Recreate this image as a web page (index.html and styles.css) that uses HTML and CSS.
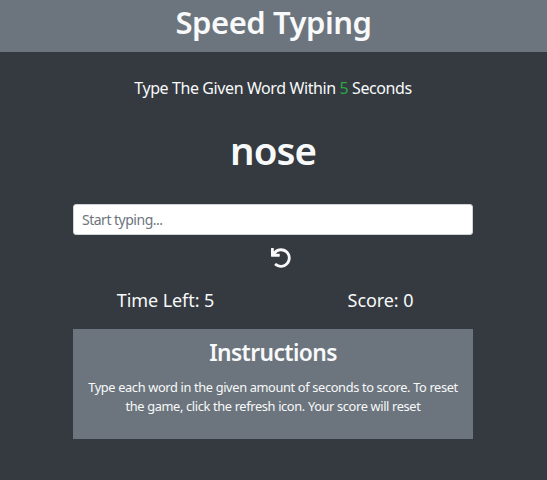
FILE: index.html
```html
<!DOCTYPE html>
<html lang="en">
<head>
<meta charset="utf-8">
<title>Speed Typing</title>
<link rel="stylesheet" href="styles.css">
</head>
<body>
<header class="header"><h1 class="title">Speed Typing</h1></header>
<main class="game">
  <p class="prompt">Type The Given Word Within <span class="seconds">5</span> Seconds</p>
  <h2 class="word">nose</h2>
  <input class="word-input" type="text" placeholder="Start typing...">
  <div class="reset">
    <svg class="reset-icon" viewBox="0 0 512 512" aria-hidden="true"><path fill="currentColor" d="M212 225H12c-7 0-12-5-12-12V12C0 5 5 0 12 0h48c7 0 12 5 12 12v78A248 248 0 0 1 256 8c137 0 248 111 248 248S393 504 256 504c-63 0-121-23-166-62-5-5-5-13-1-18l34-34c5-4 12-5 17-1A176 176 0 1 0 120 146l92-1c7 0 12 5 12 12v56c0 7-5 12-12 12z"/></svg>
  </div>
  <div class="stats"><span class="time">Time Left: 5</span><span class="score">Score: 0</span></div>
  <section class="card">
    <h3 class="card-title">Instructions</h3>
    <p class="card-text">Type each word in the given amount of seconds to score. To reset<br>the game, click the refresh icon. Your score will reset</p>
  </section>
</main>
</body>
</html>
```
FILE: styles.css
```css
* { box-sizing: border-box; }
body {
  margin: 0;
  height: 480px;
  overflow: hidden;
  background: #343a40;
  color: #f8f9fa;
  font-family: "Segoe UI", "Noto Sans", "Open Sans", sans-serif;
  text-align: center;
  white-space: nowrap;
}
h1, h2, h3, p { margin: 0; }
.header { height: 52px; background: #6c757d; }
.title { font-size: 31px; font-weight: 600; line-height: 44px; letter-spacing: -0.45px; }
.game { width: 400px; margin-left: 73px; }
.prompt { padding-top: 24px; font-size: 16px; line-height: 24px; letter-spacing: -0.4px; }
.seconds { color: #28a745; }
.word { margin-top: 26px; font-size: 38.5px; font-weight: 600; line-height: 48px; letter-spacing: -1px; }
.word-input {
  display: block;
  width: 400px;
  height: 31px;
  margin-top: 30px;
  padding: 4px 8px;
  border: 1px solid #ced4da;
  border-radius: 3px;
  background: #fff;
  font: 14px/21px "Segoe UI", "Noto Sans", sans-serif;
  letter-spacing: -0.5px;
}
.word-input::placeholder { color: #6c757d; opacity: 1; }
.reset { display: flex; justify-content: center; margin-top: 13px; padding-left: 16px; }
.reset-icon { width: 20px; height: 20px; }
.stats {
  display: grid;
  grid-template-columns: 185px 215px;
  margin-top: 18px;
  font-size: 18px;
  line-height: 28px;
  letter-spacing: -0.08px;
}
.score { padding-left: 30px; }
.card { height: 110px; margin-top: 15px; padding-top: 9px; background: #6c757d; }
.card-title { font-size: 22.8px; font-weight: 600; line-height: 29px; letter-spacing: -0.6px; }
.card-text { margin-top: 11px; font-size: 12.8px; line-height: 19.2px; letter-spacing: -0.35px; }
```
